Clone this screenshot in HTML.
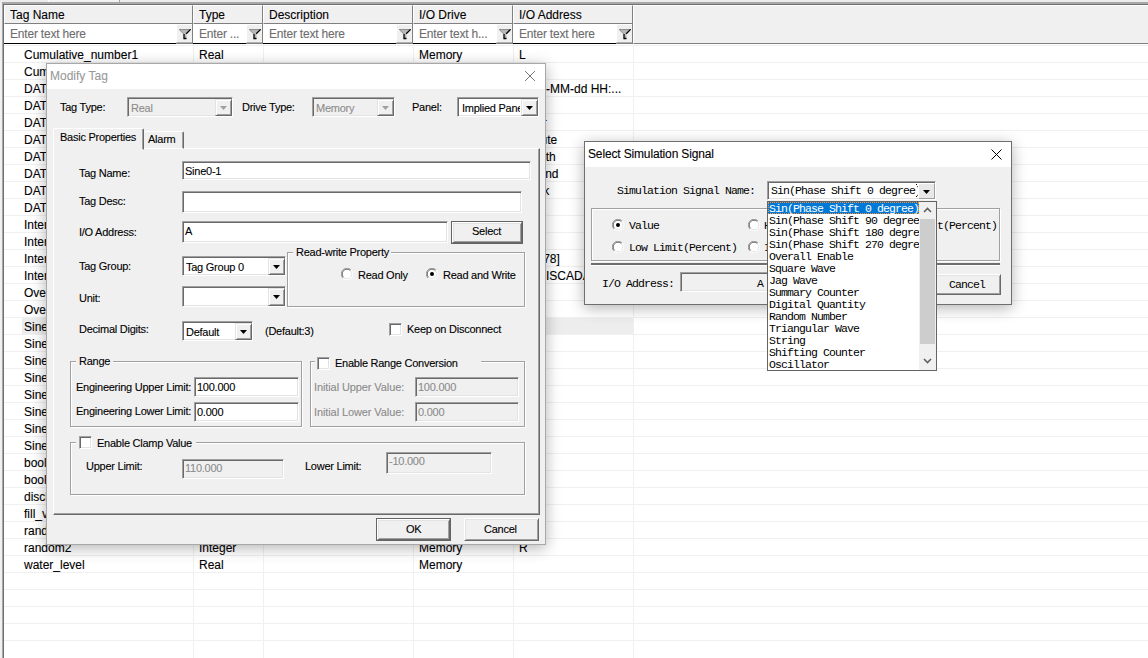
<!DOCTYPE html><html><head><meta charset="utf-8"><style>
*{box-sizing:border-box;margin:0;padding:0}
html,body{width:1148px;height:658px;overflow:hidden;background:#fff;font-family:"Liberation Sans",sans-serif;position:relative}
.a{position:absolute}
.t{position:absolute;white-space:nowrap;font-size:12px;line-height:14px;color:#000;-webkit-text-stroke:0.1px currentColor}
.ph{color:#6d6d6d}
.dlg{position:absolute;background:#f0f0f0;border:1px solid #8c8c8c;box-shadow:0 3px 14px rgba(0,0,0,.30)}
.d{position:absolute;white-space:nowrap;font-size:11px;line-height:13px;letter-spacing:-0.25px;color:#000;-webkit-text-stroke:0.1px currentColor}
.g{color:#8c8c8c}
.sunk{position:absolute;background:#fff;border:1px solid;border-color:#a0a0a0 #fff #fff #a0a0a0;box-shadow:inset 1px 1px 0 #696969,inset -1px -1px 0 #e3e3e3}
.dis{background:#f0f0f0}
.rais{position:absolute;background:#f0f0f0;border:1px solid;border-color:#fff #696969 #696969 #fff;box-shadow:inset 1px 1px 0 #e3e3e3,inset -1px -1px 0 #a0a0a0}
.grp{position:absolute;border:1px solid #a0a0a0;box-shadow:1px 1px 0 #fff,inset 1px 1px 0 #fff}
.m{position:absolute;white-space:nowrap;font-family:"Liberation Mono",monospace;font-size:11.5px;letter-spacing:-0.9px;line-height:12px;color:#000}
</style></head><body>
<div class="a" style="left:0px;top:0px;width:1148px;height:3px;background:#ececec;"></div>
<div class="a" style="left:48px;top:0px;width:1px;height:3px;background:#fff;"></div>
<div class="a" style="left:49px;top:0px;width:70px;height:3px;background:#f2f2f2;"></div>
<div class="a" style="left:119px;top:0px;width:1px;height:3px;background:#a0a0a0;"></div>
<div class="a" style="left:0px;top:3px;width:2px;height:655px;background:#f0f0f0;"></div>
<div class="a" style="left:2px;top:2px;width:1146px;height:2px;background:#a8a8a8;"></div>
<div class="a" style="left:2px;top:2px;width:1px;height:656px;background:#a8a8a8;"></div>
<div class="a" style="left:3px;top:4px;width:1145px;height:1px;background:#707070;"></div>
<div class="a" style="left:3px;top:4px;width:1px;height:654px;background:#707070;"></div>
<div class="a" style="left:4px;top:5px;width:189px;height:19px;background:#f0f0f0;border-right:1px solid #808080;border-bottom:1px solid #808080;border-top:1px solid #fff;border-left:1px solid #fff"></div>
<span class="t" style="left:10px;top:8px;">Tag Name</span>
<div class="a" style="left:4px;top:24px;width:189px;height:20px;background:#fff;border-right:1px solid #808080"></div>
<div class="a" style="left:4px;top:43px;width:172px;height:1px;background:#000;"></div>
<div class="a" style="left:176px;top:43px;width:16px;height:1px;background:#808080;"></div>
<span class="t ph" style="left:10px;top:27px;letter-spacing:-0.2px">Enter text here</span>
<div class="a" style="left:176px;top:24px;width:16px;height:19px;background:#f0f0f0;border-top:1px solid #fff;border-left:1px solid #fff;border-bottom:1px solid #b0b0b0"><svg width="16" height="19" viewBox="0 0 16 19" style="position:absolute;left:-1px;top:-1px"><path d="M3.5 6H14.5L10.5 10V14.5H8V10Z" fill="#b8b8b8"/><path d="M3 5.5H14.5M3.5 5.8L8 10.2" fill="none" stroke="#8c8c8c" stroke-width="1"/><path d="M14.6 5.4L10.2 9.8M8 10V14.5H10.5" fill="none" stroke="#000" stroke-width="1.3"/></svg></div>
<div class="a" style="left:193px;top:5px;width:70px;height:19px;background:#f0f0f0;border-right:1px solid #808080;border-bottom:1px solid #808080;border-top:1px solid #fff;border-left:1px solid #fff"></div>
<span class="t" style="left:199px;top:8px;">Type</span>
<div class="a" style="left:193px;top:24px;width:70px;height:20px;background:#fff;border-right:1px solid #808080"></div>
<div class="a" style="left:193px;top:43px;width:53px;height:1px;background:#000;"></div>
<div class="a" style="left:246px;top:43px;width:16px;height:1px;background:#808080;"></div>
<span class="t ph" style="left:199px;top:27px;letter-spacing:-0.2px">Enter ...</span>
<div class="a" style="left:246px;top:24px;width:16px;height:19px;background:#f0f0f0;border-top:1px solid #fff;border-left:1px solid #fff;border-bottom:1px solid #b0b0b0"><svg width="16" height="19" viewBox="0 0 16 19" style="position:absolute;left:-1px;top:-1px"><path d="M3.5 6H14.5L10.5 10V14.5H8V10Z" fill="#b8b8b8"/><path d="M3 5.5H14.5M3.5 5.8L8 10.2" fill="none" stroke="#8c8c8c" stroke-width="1"/><path d="M14.6 5.4L10.2 9.8M8 10V14.5H10.5" fill="none" stroke="#000" stroke-width="1.3"/></svg></div>
<div class="a" style="left:263px;top:5px;width:150px;height:19px;background:#f0f0f0;border-right:1px solid #808080;border-bottom:1px solid #808080;border-top:1px solid #fff;border-left:1px solid #fff"></div>
<span class="t" style="left:269px;top:8px;">Description</span>
<div class="a" style="left:263px;top:24px;width:150px;height:20px;background:#fff;border-right:1px solid #808080"></div>
<div class="a" style="left:263px;top:43px;width:133px;height:1px;background:#000;"></div>
<div class="a" style="left:396px;top:43px;width:16px;height:1px;background:#808080;"></div>
<span class="t ph" style="left:269px;top:27px;letter-spacing:-0.2px">Enter text here</span>
<div class="a" style="left:396px;top:24px;width:16px;height:19px;background:#f0f0f0;border-top:1px solid #fff;border-left:1px solid #fff;border-bottom:1px solid #b0b0b0"><svg width="16" height="19" viewBox="0 0 16 19" style="position:absolute;left:-1px;top:-1px"><path d="M3.5 6H14.5L10.5 10V14.5H8V10Z" fill="#b8b8b8"/><path d="M3 5.5H14.5M3.5 5.8L8 10.2" fill="none" stroke="#8c8c8c" stroke-width="1"/><path d="M14.6 5.4L10.2 9.8M8 10V14.5H10.5" fill="none" stroke="#000" stroke-width="1.3"/></svg></div>
<div class="a" style="left:413px;top:5px;width:100px;height:19px;background:#f0f0f0;border-right:1px solid #808080;border-bottom:1px solid #808080;border-top:1px solid #fff;border-left:1px solid #fff"></div>
<span class="t" style="left:419px;top:8px;">I/O Drive</span>
<div class="a" style="left:413px;top:24px;width:100px;height:20px;background:#fff;border-right:1px solid #808080"></div>
<div class="a" style="left:413px;top:43px;width:83px;height:1px;background:#000;"></div>
<div class="a" style="left:496px;top:43px;width:16px;height:1px;background:#808080;"></div>
<span class="t ph" style="left:419px;top:27px;letter-spacing:-0.2px">Enter text h...</span>
<div class="a" style="left:496px;top:24px;width:16px;height:19px;background:#f0f0f0;border-top:1px solid #fff;border-left:1px solid #fff;border-bottom:1px solid #b0b0b0"><svg width="16" height="19" viewBox="0 0 16 19" style="position:absolute;left:-1px;top:-1px"><path d="M3.5 6H14.5L10.5 10V14.5H8V10Z" fill="#b8b8b8"/><path d="M3 5.5H14.5M3.5 5.8L8 10.2" fill="none" stroke="#8c8c8c" stroke-width="1"/><path d="M14.6 5.4L10.2 9.8M8 10V14.5H10.5" fill="none" stroke="#000" stroke-width="1.3"/></svg></div>
<div class="a" style="left:513px;top:5px;width:120px;height:19px;background:#f0f0f0;border-right:1px solid #808080;border-bottom:1px solid #808080;border-top:1px solid #fff;border-left:1px solid #fff"></div>
<span class="t" style="left:519px;top:8px;">I/O Address</span>
<div class="a" style="left:513px;top:24px;width:120px;height:20px;background:#fff;border-right:1px solid #808080"></div>
<div class="a" style="left:513px;top:43px;width:103px;height:1px;background:#000;"></div>
<div class="a" style="left:616px;top:43px;width:16px;height:1px;background:#808080;"></div>
<span class="t ph" style="left:519px;top:27px;letter-spacing:-0.2px">Enter text here</span>
<div class="a" style="left:616px;top:24px;width:16px;height:19px;background:#f0f0f0;border-top:1px solid #fff;border-left:1px solid #fff;border-bottom:1px solid #b0b0b0"><svg width="16" height="19" viewBox="0 0 16 19" style="position:absolute;left:-1px;top:-1px"><path d="M3.5 6H14.5L10.5 10V14.5H8V10Z" fill="#b8b8b8"/><path d="M3 5.5H14.5M3.5 5.8L8 10.2" fill="none" stroke="#8c8c8c" stroke-width="1"/><path d="M14.6 5.4L10.2 9.8M8 10V14.5H10.5" fill="none" stroke="#000" stroke-width="1.3"/></svg></div>
<div class="a" style="left:633px;top:5px;width:515px;height:39px;background:#f0f0f0;border-bottom:1px solid #808080;border-top:1px solid #fff;border-left:1px solid #fff"></div>
<div class="a" style="left:4px;top:45px;width:1144px;height:1px;background:#f0f0f0;"></div>
<div class="a" style="left:4px;top:62px;width:1144px;height:1px;background:#f0f0f0;"></div>
<div class="a" style="left:4px;top:79px;width:1144px;height:1px;background:#f0f0f0;"></div>
<div class="a" style="left:4px;top:96px;width:1144px;height:1px;background:#f0f0f0;"></div>
<div class="a" style="left:4px;top:113px;width:1144px;height:1px;background:#f0f0f0;"></div>
<div class="a" style="left:4px;top:130px;width:1144px;height:1px;background:#f0f0f0;"></div>
<div class="a" style="left:4px;top:147px;width:1144px;height:1px;background:#f0f0f0;"></div>
<div class="a" style="left:4px;top:164px;width:1144px;height:1px;background:#f0f0f0;"></div>
<div class="a" style="left:4px;top:181px;width:1144px;height:1px;background:#f0f0f0;"></div>
<div class="a" style="left:4px;top:198px;width:1144px;height:1px;background:#f0f0f0;"></div>
<div class="a" style="left:4px;top:215px;width:1144px;height:1px;background:#f0f0f0;"></div>
<div class="a" style="left:4px;top:232px;width:1144px;height:1px;background:#f0f0f0;"></div>
<div class="a" style="left:4px;top:249px;width:1144px;height:1px;background:#f0f0f0;"></div>
<div class="a" style="left:4px;top:266px;width:1144px;height:1px;background:#f0f0f0;"></div>
<div class="a" style="left:4px;top:283px;width:1144px;height:1px;background:#f0f0f0;"></div>
<div class="a" style="left:4px;top:300px;width:1144px;height:1px;background:#f0f0f0;"></div>
<div class="a" style="left:4px;top:317px;width:1144px;height:1px;background:#f0f0f0;"></div>
<div class="a" style="left:4px;top:334px;width:1144px;height:1px;background:#f0f0f0;"></div>
<div class="a" style="left:4px;top:351px;width:1144px;height:1px;background:#f0f0f0;"></div>
<div class="a" style="left:4px;top:368px;width:1144px;height:1px;background:#f0f0f0;"></div>
<div class="a" style="left:4px;top:385px;width:1144px;height:1px;background:#f0f0f0;"></div>
<div class="a" style="left:4px;top:402px;width:1144px;height:1px;background:#f0f0f0;"></div>
<div class="a" style="left:4px;top:419px;width:1144px;height:1px;background:#f0f0f0;"></div>
<div class="a" style="left:4px;top:436px;width:1144px;height:1px;background:#f0f0f0;"></div>
<div class="a" style="left:4px;top:453px;width:1144px;height:1px;background:#f0f0f0;"></div>
<div class="a" style="left:4px;top:470px;width:1144px;height:1px;background:#f0f0f0;"></div>
<div class="a" style="left:4px;top:487px;width:1144px;height:1px;background:#f0f0f0;"></div>
<div class="a" style="left:4px;top:504px;width:1144px;height:1px;background:#f0f0f0;"></div>
<div class="a" style="left:4px;top:521px;width:1144px;height:1px;background:#f0f0f0;"></div>
<div class="a" style="left:4px;top:538px;width:1144px;height:1px;background:#f0f0f0;"></div>
<div class="a" style="left:4px;top:555px;width:1144px;height:1px;background:#f0f0f0;"></div>
<div class="a" style="left:4px;top:572px;width:1144px;height:1px;background:#f0f0f0;"></div>
<div class="a" style="left:4px;top:589px;width:1144px;height:1px;background:#f0f0f0;"></div>
<div class="a" style="left:4px;top:606px;width:1144px;height:1px;background:#f0f0f0;"></div>
<div class="a" style="left:4px;top:623px;width:1144px;height:1px;background:#f0f0f0;"></div>
<div class="a" style="left:4px;top:640px;width:1144px;height:1px;background:#f0f0f0;"></div>
<div class="a" style="left:22px;top:318px;width:611px;height:16px;background:#ededed;"></div>
<div class="a" style="left:193px;top:44px;width:1px;height:614px;background:#f0f0f0;"></div>
<div class="a" style="left:263px;top:44px;width:1px;height:614px;background:#f0f0f0;"></div>
<div class="a" style="left:413px;top:44px;width:1px;height:614px;background:#f0f0f0;"></div>
<div class="a" style="left:513px;top:44px;width:1px;height:614px;background:#f0f0f0;"></div>
<div class="a" style="left:633px;top:44px;width:1px;height:614px;background:#f0f0f0;"></div>
<span class="t" style="left:24px;top:48px;">Cumulative_number1</span>
<span class="t" style="left:199px;top:48px;">Real</span>
<span class="t" style="left:419px;top:48px;">Memory</span>
<span class="t" style="left:519px;top:48px;">L</span>
<span class="t" style="left:24px;top:65px;">Cumulative_number2</span>
<span class="t" style="left:199px;top:65px;">Real</span>
<span class="t" style="left:419px;top:65px;">Memory</span>
<span class="t" style="left:24px;top:82px;">DATE_TIME</span>
<span class="t" style="left:199px;top:82px;">String</span>
<span class="t" style="left:419px;top:82px;">Memory</span>
<span class="t" style="left:24px;top:99px;">DATE_Year</span>
<span class="t" style="left:199px;top:99px;">Integer</span>
<span class="t" style="left:419px;top:99px;">Memory</span>
<span class="t" style="left:24px;top:116px;">DATE_Hour</span>
<span class="t" style="left:199px;top:116px;">Integer</span>
<span class="t" style="left:419px;top:116px;">Memory</span>
<span class="t" style="left:24px;top:133px;">DATE_Minute</span>
<span class="t" style="left:199px;top:133px;">Integer</span>
<span class="t" style="left:419px;top:133px;">Memory</span>
<span class="t" style="left:24px;top:150px;">DATE_Month</span>
<span class="t" style="left:199px;top:150px;">Integer</span>
<span class="t" style="left:419px;top:150px;">Memory</span>
<span class="t" style="left:24px;top:167px;">DATE_Second</span>
<span class="t" style="left:199px;top:167px;">Integer</span>
<span class="t" style="left:419px;top:167px;">Memory</span>
<span class="t" style="left:24px;top:184px;">DATE_Week</span>
<span class="t" style="left:199px;top:184px;">Integer</span>
<span class="t" style="left:419px;top:184px;">Memory</span>
<span class="t" style="left:24px;top:201px;">DATE_Day</span>
<span class="t" style="left:199px;top:201px;">Integer</span>
<span class="t" style="left:419px;top:201px;">Memory</span>
<span class="t" style="left:24px;top:218px;">Internal1</span>
<span class="t" style="left:199px;top:218px;">Integer</span>
<span class="t" style="left:419px;top:218px;">Memory</span>
<span class="t" style="left:24px;top:235px;">Internal2</span>
<span class="t" style="left:199px;top:235px;">Integer</span>
<span class="t" style="left:419px;top:235px;">Memory</span>
<span class="t" style="left:24px;top:252px;">Internal3</span>
<span class="t" style="left:199px;top:252px;">String</span>
<span class="t" style="left:419px;top:252px;">Memory</span>
<span class="t" style="left:24px;top:269px;">Internal4</span>
<span class="t" style="left:199px;top:269px;">String</span>
<span class="t" style="left:419px;top:269px;">Memory</span>
<span class="t" style="left:24px;top:286px;">Overall1</span>
<span class="t" style="left:199px;top:286px;">Bool</span>
<span class="t" style="left:419px;top:286px;">Memory</span>
<span class="t" style="left:24px;top:303px;">Overall2</span>
<span class="t" style="left:199px;top:303px;">Bool</span>
<span class="t" style="left:419px;top:303px;">Memory</span>
<span class="t" style="left:24px;top:320px;">Sine0-1</span>
<span class="t" style="left:199px;top:320px;">Real</span>
<span class="t" style="left:419px;top:320px;">Memory</span>
<span class="t" style="left:24px;top:337px;">Sine0-2</span>
<span class="t" style="left:199px;top:337px;">Real</span>
<span class="t" style="left:419px;top:337px;">Memory</span>
<span class="t" style="left:24px;top:354px;">Sine0-3</span>
<span class="t" style="left:199px;top:354px;">Real</span>
<span class="t" style="left:419px;top:354px;">Memory</span>
<span class="t" style="left:24px;top:371px;">Sine0-4</span>
<span class="t" style="left:199px;top:371px;">Real</span>
<span class="t" style="left:419px;top:371px;">Memory</span>
<span class="t" style="left:24px;top:388px;">Sine0-5</span>
<span class="t" style="left:199px;top:388px;">Real</span>
<span class="t" style="left:419px;top:388px;">Memory</span>
<span class="t" style="left:24px;top:405px;">Sine0-6</span>
<span class="t" style="left:199px;top:405px;">Real</span>
<span class="t" style="left:419px;top:405px;">Memory</span>
<span class="t" style="left:24px;top:422px;">Sine0-7</span>
<span class="t" style="left:199px;top:422px;">Real</span>
<span class="t" style="left:419px;top:422px;">Memory</span>
<span class="t" style="left:24px;top:439px;">Sine0-8</span>
<span class="t" style="left:199px;top:439px;">Real</span>
<span class="t" style="left:419px;top:439px;">Memory</span>
<span class="t" style="left:24px;top:456px;">bool1</span>
<span class="t" style="left:199px;top:456px;">Bool</span>
<span class="t" style="left:419px;top:456px;">Memory</span>
<span class="t" style="left:24px;top:473px;">bool2</span>
<span class="t" style="left:199px;top:473px;">Bool</span>
<span class="t" style="left:419px;top:473px;">Memory</span>
<span class="t" style="left:24px;top:490px;">discharge</span>
<span class="t" style="left:199px;top:490px;">Bool</span>
<span class="t" style="left:419px;top:490px;">Memory</span>
<span class="t" style="left:24px;top:507px;">fill_value</span>
<span class="t" style="left:199px;top:507px;">Real</span>
<span class="t" style="left:419px;top:507px;">Memory</span>
<span class="t" style="left:24px;top:524px;">random1</span>
<span class="t" style="left:199px;top:524px;">Integer</span>
<span class="t" style="left:419px;top:524px;">Memory</span>
<span class="t" style="left:519px;top:524px;">R</span>
<span class="t" style="left:24px;top:541px;">random2</span>
<span class="t" style="left:199px;top:541px;">Integer</span>
<span class="t" style="left:419px;top:541px;">Memory</span>
<span class="t" style="left:519px;top:541px;">R</span>
<span class="t" style="left:24px;top:558px;">water_level</span>
<span class="t" style="left:199px;top:558px;">Real</span>
<span class="t" style="left:419px;top:558px;">Memory</span>
<span class="t" style="left:546px;top:82px;">-MM-dd HH:...</span>
<span class="t" style="left:536px;top:116px;">ur</span>
<span class="t" style="left:540.5px;top:133px;">ute</span>
<span class="t" style="left:539px;top:150px;">nth</span>
<span class="t" style="left:538.5px;top:167px;">ond</span>
<span class="t" style="left:536.5px;top:184px;">ek</span>
<span class="t" style="left:536.5px;top:252px;">678]</span>
<span class="t" style="left:546px;top:269px;">ISCADA</span>
<div class="dlg" style="left:46px;top:63px;width:500px;height:482px;border-color:#a8a8a8"></div>
<div class="a" style="left:47px;top:64px;width:498px;height:25px;background:#fff;"></div>
<span class="t" style="left:50px;top:69px;color:#999">Modify Tag</span>
<svg class="a" style="left:525px;top:71px" width="10" height="10" viewBox="0 0 10 10"><path d="M0 0L10 10M10 0L0 10" stroke="#777" stroke-width="1"/></svg>
<span class="d" style="left:60px;top:101px;">Tag Type:</span>
<div class="sunk" style="left:127px;top:97px;width:106px;height:20px;background:#f0f0f0"></div>
<div class="a" style="left:215px;top:99px;width:17px;height:17px;background:#f0f0f0;border:1px solid;border-color:#e3e3e3 #696969 #696969 #e3e3e3;box-shadow:inset 1px 1px 0 #fff,inset -1px -1px 0 #a0a0a0"></div>
<svg class="a" style="left:220px;top:106px" width="7" height="4" viewBox="0 0 7 4"><path d="M0 0H7L3.5 4Z" fill="#a0a0a0"/></svg>
<span class="d g" style="left:131px;top:102px;">Real</span>
<span class="d" style="left:242px;top:101px;">Drive Type:</span>
<div class="sunk" style="left:312px;top:97px;width:83px;height:20px;background:#f0f0f0"></div>
<div class="a" style="left:377px;top:99px;width:17px;height:17px;background:#f0f0f0;border:1px solid;border-color:#e3e3e3 #696969 #696969 #e3e3e3;box-shadow:inset 1px 1px 0 #fff,inset -1px -1px 0 #a0a0a0"></div>
<svg class="a" style="left:382px;top:106px" width="7" height="4" viewBox="0 0 7 4"><path d="M0 0H7L3.5 4Z" fill="#a0a0a0"/></svg>
<span class="d g" style="left:316px;top:102px;">Memory</span>
<span class="d" style="left:412px;top:101px;">Panel:</span>
<div class="sunk" style="left:457px;top:97px;width:82px;height:20px;background:#fff"></div>
<div class="a" style="left:521px;top:99px;width:17px;height:17px;background:#f0f0f0;border:1px solid;border-color:#e3e3e3 #696969 #696969 #e3e3e3;box-shadow:inset 1px 1px 0 #fff,inset -1px -1px 0 #a0a0a0"></div>
<svg class="a" style="left:526px;top:106px" width="7" height="4" viewBox="0 0 7 4"><path d="M0 0H7L3.5 4Z" fill="#000"/></svg>
<div class="a" style="left:459px;top:99px;width:61px;height:16px;overflow:hidden"><span class="d" style="left:3px;top:3px">Implied Panel</span></div>
<div class="a" style="left:53px;top:148px;width:487px;height:367px;border:1px solid;border-color:#fff #696969 #696969 #fff;box-shadow:inset -1px -1px 0 #a0a0a0"></div>
<div class="a" style="left:143px;top:131px;width:41px;height:18px;border:1px solid;border-color:#fff #696969 transparent #fff;box-shadow:inset -1px 0 0 #a0a0a0;border-radius:2px 2px 0 0"></div>
<span class="d" style="left:148px;top:133px;">Alarm</span>
<div class="a" style="left:53px;top:128px;width:91px;height:22px;background:#f0f0f0;border:1px solid;border-color:#fff #696969 transparent #fff;box-shadow:inset -1px 0 0 #a0a0a0;border-radius:2px 2px 0 0"></div>
<span class="d" style="left:60px;top:131px;">Basic Properties</span>
<span class="d" style="left:79px;top:167px;">Tag Name:</span>
<div class="sunk" style="left:182px;top:161px;width:349px;height:19px;background:#fff"></div>
<span class="d" style="left:185px;top:165px;">Sine0-1</span>
<span class="d" style="left:79px;top:195px;">Tag Desc:</span>
<div class="sunk" style="left:182px;top:191px;width:340px;height:22px;background:#fff"></div>
<span class="d" style="left:79px;top:226px;">I/O Address:</span>
<div class="sunk" style="left:182px;top:221px;width:266px;height:22px;background:#fff"></div>
<span class="d" style="left:185px;top:225px;">A</span>
<div class="a" style="left:451px;top:221px;width:72px;height:23px;border:1px solid #646464;background:#f0f0f0"></div>
<div class="rais" style="left:452px;top:222px;width:70px;height:21px"></div>
<span class="d" style="left:472px;top:225px;">Select</span>
<span class="d" style="left:79px;top:260px;">Tag Group:</span>
<div class="sunk" style="left:182px;top:256px;width:104px;height:20px;background:#fff"></div>
<div class="a" style="left:268px;top:258px;width:17px;height:17px;background:#f0f0f0;border:1px solid;border-color:#e3e3e3 #696969 #696969 #e3e3e3;box-shadow:inset 1px 1px 0 #fff,inset -1px -1px 0 #a0a0a0"></div>
<svg class="a" style="left:273px;top:265px" width="7" height="4" viewBox="0 0 7 4"><path d="M0 0H7L3.5 4Z" fill="#000"/></svg>
<span class="d" style="left:186px;top:261px;">Tag Group 0</span>
<span class="d" style="left:79px;top:292px;">Unit:</span>
<div class="sunk" style="left:182px;top:286px;width:104px;height:21px;background:#fff"></div>
<div class="a" style="left:268px;top:288px;width:17px;height:18px;background:#f0f0f0;border:1px solid;border-color:#e3e3e3 #696969 #696969 #e3e3e3;box-shadow:inset 1px 1px 0 #fff,inset -1px -1px 0 #a0a0a0"></div>
<svg class="a" style="left:273px;top:295px" width="7" height="4" viewBox="0 0 7 4"><path d="M0 0H7L3.5 4Z" fill="#000"/></svg>
<div class="a" style="left:287px;top:252px;width:238px;height:55px;border:1px solid #a0a0a0;box-shadow:1px 1px 0 #fff,inset 1px 1px 0 #fff"></div>
<div class="a" style="left:293px;top:246px;width:98px;height:14px;background:#f0f0f0;"></div>
<span class="d" style="left:296px;top:246px;">Read-write Property</span>
<svg class="a" style="left:341px;top:268px" width="12" height="12" viewBox="0 0 12 12"><circle cx="6" cy="6" r="5.5" fill="#fff"/><path d="M1.9 10.1A5.5 5.5 0 0 1 10.1 1.9" fill="none" stroke="#a0a0a0" stroke-width="1"/><path d="M2.6 9.4A4.5 4.5 0 0 1 9.4 2.6" fill="none" stroke="#696969" stroke-width="1"/><path d="M10.1 1.9A5.5 5.5 0 0 1 1.9 10.1" fill="none" stroke="#fff" stroke-width="1"/><path d="M9.4 2.6A4.5 4.5 0 0 1 2.6 9.4" fill="none" stroke="#e3e3e3" stroke-width="1"/></svg>
<span class="d" style="left:358px;top:269px;">Read Only</span>
<svg class="a" style="left:426px;top:268px" width="12" height="12" viewBox="0 0 12 12"><circle cx="6" cy="6" r="5.5" fill="#fff"/><path d="M1.9 10.1A5.5 5.5 0 0 1 10.1 1.9" fill="none" stroke="#a0a0a0" stroke-width="1"/><path d="M2.6 9.4A4.5 4.5 0 0 1 9.4 2.6" fill="none" stroke="#696969" stroke-width="1"/><path d="M10.1 1.9A5.5 5.5 0 0 1 1.9 10.1" fill="none" stroke="#fff" stroke-width="1"/><path d="M9.4 2.6A4.5 4.5 0 0 1 2.6 9.4" fill="none" stroke="#e3e3e3" stroke-width="1"/><circle cx="6" cy="6" r="2" fill="#000"/></svg>
<span class="d" style="left:443px;top:269px;">Read and Write</span>
<span class="d" style="left:79px;top:323px;">Decimal Digits:</span>
<div class="sunk" style="left:182px;top:321px;width:71px;height:20px;background:#fff"></div>
<div class="a" style="left:235px;top:323px;width:17px;height:17px;background:#f0f0f0;border:1px solid;border-color:#e3e3e3 #696969 #696969 #e3e3e3;box-shadow:inset 1px 1px 0 #fff,inset -1px -1px 0 #a0a0a0"></div>
<svg class="a" style="left:240px;top:330px" width="7" height="4" viewBox="0 0 7 4"><path d="M0 0H7L3.5 4Z" fill="#000"/></svg>
<span class="d" style="left:186px;top:326px;">Default</span>
<span class="d" style="left:265px;top:325px;">(Default:3)</span>
<div class="sunk" style="left:389px;top:323px;width:13px;height:13px;background:#fff"></div>
<span class="d" style="left:407px;top:323px;">Keep on Disconnect</span>
<div class="a" style="left:70px;top:361px;width:232px;height:66px;border:1px solid #a0a0a0;box-shadow:1px 1px 0 #fff,inset 1px 1px 0 #fff"></div>
<div class="a" style="left:76px;top:354px;width:37px;height:14px;background:#f0f0f0;"></div>
<span class="d" style="left:79px;top:355px;">Range</span>
<span class="d" style="left:76px;top:381px;letter-spacing:-0.25px">Engineering Upper Limit:</span>
<div class="sunk" style="left:194px;top:377px;width:105px;height:20px;background:#fff"></div>
<span class="d" style="left:197px;top:381px;">100.000</span>
<span class="d" style="left:76px;top:405px;letter-spacing:-0.25px">Engineering Lower Limit:</span>
<div class="sunk" style="left:194px;top:402px;width:105px;height:20px;background:#fff"></div>
<span class="d" style="left:197px;top:406px;">0.000</span>
<div class="a" style="left:310px;top:361px;width:215px;height:66px;border:1px solid #a0a0a0;box-shadow:1px 1px 0 #fff,inset 1px 1px 0 #fff"></div>
<div class="a" style="left:315px;top:354px;width:166px;height:14px;background:#f0f0f0;"></div>
<div class="sunk" style="left:317px;top:357px;width:13px;height:13px;background:#fff"></div>
<span class="d" style="left:335px;top:357px;">Enable Range Conversion</span>
<span class="d g" style="left:314px;top:381px;letter-spacing:-0.1px">Initial Upper Value:</span>
<div class="sunk" style="left:415px;top:377px;width:104px;height:20px;background:#f0f0f0"></div>
<span class="d g" style="left:418px;top:381px;">100.000</span>
<span class="d g" style="left:314px;top:406px;letter-spacing:-0.1px">Initial Lower Value:</span>
<div class="sunk" style="left:415px;top:402px;width:104px;height:20px;background:#f0f0f0"></div>
<span class="d g" style="left:418px;top:406px;">0.000</span>
<div class="a" style="left:70px;top:442px;width:455px;height:53px;border:1px solid #a0a0a0;box-shadow:1px 1px 0 #fff,inset 1px 1px 0 #fff"></div>
<div class="a" style="left:76px;top:436px;width:120px;height:14px;background:#f0f0f0;"></div>
<div class="sunk" style="left:79px;top:436px;width:13px;height:13px;background:#fff"></div>
<span class="d" style="left:97px;top:437px;">Enable Clamp Value</span>
<span class="d" style="left:86px;top:460px;">Upper Limit:</span>
<div class="sunk" style="left:182px;top:459px;width:102px;height:20px;background:#f0f0f0"></div>
<span class="d g" style="left:185px;top:462px;">110.000</span>
<span class="d" style="left:305px;top:460px;">Lower Limit:</span>
<div class="sunk" style="left:386px;top:452px;width:106px;height:22px;background:#f0f0f0"></div>
<span class="d g" style="left:389px;top:455px;">-10.000</span>
<div class="a" style="left:376px;top:518px;width:75px;height:23px;border:1px solid #646464;background:#f0f0f0"></div>
<div class="rais" style="left:377px;top:519px;width:73px;height:21px"></div>
<span class="d" style="left:406px;top:523px;">OK</span>
<div class="rais" style="left:464px;top:518px;width:75px;height:23px"></div>
<span class="d" style="left:484px;top:523px;">Cancel</span>
<div class="dlg" style="left:584px;top:141px;width:428px;height:164px;border-color:#6e6e6e"></div>
<div class="a" style="left:585px;top:142px;width:426px;height:25px;background:#fff;"></div>
<span class="t" style="left:588px;top:147px;letter-spacing:-0.15px">Select Simulation Signal</span>
<svg class="a" style="left:991px;top:149px" width="11" height="11" viewBox="0 0 11 11"><path d="M0.5 0.5L10.5 10.5M10.5 0.5L0.5 10.5" stroke="#000" stroke-width="1"/></svg>
<span class="m" style="left:617px;top:185px;">Simulation Signal Name:</span>
<div class="a" style="left:591px;top:208px;width:409px;height:53px;border:1px solid #a0a0a0;box-shadow:1px 1px 0 #fff,inset 1px 1px 0 #fff"></div>
<svg class="a" style="left:612px;top:219px" width="12" height="12" viewBox="0 0 12 12"><circle cx="6" cy="6" r="5.5" fill="#fff"/><path d="M1.9 10.1A5.5 5.5 0 0 1 10.1 1.9" fill="none" stroke="#a0a0a0" stroke-width="1"/><path d="M2.6 9.4A4.5 4.5 0 0 1 9.4 2.6" fill="none" stroke="#696969" stroke-width="1"/><path d="M10.1 1.9A5.5 5.5 0 0 1 1.9 10.1" fill="none" stroke="#fff" stroke-width="1"/><path d="M9.4 2.6A4.5 4.5 0 0 1 2.6 9.4" fill="none" stroke="#e3e3e3" stroke-width="1"/><circle cx="6" cy="6" r="2" fill="#000"/></svg>
<span class="m" style="left:629px;top:220px;">Value</span>
<svg class="a" style="left:612px;top:241px" width="12" height="12" viewBox="0 0 12 12"><circle cx="6" cy="6" r="5.5" fill="#fff"/><path d="M1.9 10.1A5.5 5.5 0 0 1 10.1 1.9" fill="none" stroke="#a0a0a0" stroke-width="1"/><path d="M2.6 9.4A4.5 4.5 0 0 1 9.4 2.6" fill="none" stroke="#696969" stroke-width="1"/><path d="M10.1 1.9A5.5 5.5 0 0 1 1.9 10.1" fill="none" stroke="#fff" stroke-width="1"/><path d="M9.4 2.6A4.5 4.5 0 0 1 2.6 9.4" fill="none" stroke="#e3e3e3" stroke-width="1"/></svg>
<span class="m" style="left:629px;top:242px;">Low Limit(Percent)</span>
<svg class="a" style="left:748px;top:219px" width="12" height="12" viewBox="0 0 12 12"><circle cx="6" cy="6" r="5.5" fill="#fff"/><path d="M1.9 10.1A5.5 5.5 0 0 1 10.1 1.9" fill="none" stroke="#a0a0a0" stroke-width="1"/><path d="M2.6 9.4A4.5 4.5 0 0 1 9.4 2.6" fill="none" stroke="#696969" stroke-width="1"/><path d="M10.1 1.9A5.5 5.5 0 0 1 1.9 10.1" fill="none" stroke="#fff" stroke-width="1"/><path d="M9.4 2.6A4.5 4.5 0 0 1 2.6 9.4" fill="none" stroke="#e3e3e3" stroke-width="1"/></svg>
<span class="m" style="left:764px;top:220px;">High Limit(Percent)</span>
<span class="m" style="left:937px;top:220px;">t(Percent)</span>
<svg class="a" style="left:748px;top:241px" width="12" height="12" viewBox="0 0 12 12"><circle cx="6" cy="6" r="5.5" fill="#fff"/><path d="M1.9 10.1A5.5 5.5 0 0 1 10.1 1.9" fill="none" stroke="#a0a0a0" stroke-width="1"/><path d="M2.6 9.4A4.5 4.5 0 0 1 9.4 2.6" fill="none" stroke="#696969" stroke-width="1"/><path d="M10.1 1.9A5.5 5.5 0 0 1 1.9 10.1" fill="none" stroke="#fff" stroke-width="1"/><path d="M9.4 2.6A4.5 4.5 0 0 1 2.6 9.4" fill="none" stroke="#e3e3e3" stroke-width="1"/></svg>
<span class="m" style="left:764px;top:242px;">Initial Value</span>
<div class="a" style="left:591px;top:263px;width:409px;height:2px;background:#6e6e6e;"></div>
<div class="a" style="left:591px;top:265px;width:409px;height:1px;background:#fff;"></div>
<span class="m" style="left:602px;top:278px;">I/O Address:</span>
<div class="sunk" style="left:680px;top:272px;width:181px;height:20px;background:#f0f0f0"></div>
<span class="m" style="left:757px;top:278px;">A</span>
<div class="a" style="left:850px;top:274px;width:71px;height:21px;border:1px solid #646464;background:#f0f0f0"></div>
<div class="rais" style="left:851px;top:275px;width:69px;height:19px"></div>
<span class="m" style="left:876px;top:279px;">OK</span>
<div class="rais" style="left:932px;top:274px;width:69px;height:21px"></div>
<span class="m" style="left:949px;top:279px;">Cancel</span>
<div class="sunk" style="left:767px;top:181px;width:169px;height:19px;background:#fff"></div>
<span class="m" style="left:771px;top:185px;">Sin(Phase Shift 0 degree)</span>
<div class="a" style="left:916px;top:184px;width:1px;height:1px;background:#000;"></div>
<div class="a" style="left:916px;top:196px;width:1px;height:1px;background:#000;"></div>
<div class="a" style="left:918px;top:183px;width:17px;height:16px;background:#e8e8e8;border:1px solid;border-color:#fff #a0a0a0 #a0a0a0 #fff"></div>
<svg class="a" style="left:923px;top:190px" width="7" height="4" viewBox="0 0 7 4"><path d="M0 0H7L3.5 4Z" fill="#000"/></svg>
<div class="a" style="left:767px;top:201px;width:170px;height:170px;background:#fff;border:1px solid #646464"></div>
<div class="a" style="left:768px;top:202px;width:151px;height:12px;background:#0078d7;outline:1px dotted #ff8c28;outline-offset:-1px"></div>
<div class="a" style="left:768px;top:202px;width:151px;height:168px;overflow:hidden">
<span class="m" style="left:1px;top:1px;color:#fff">Sin(Phase Shift 0 degree)</span>
<span class="m" style="left:1px;top:13px;color:#000">Sin(Phase Shift 90 degree)</span>
<span class="m" style="left:1px;top:25px;color:#000">Sin(Phase Shift 180 degree)</span>
<span class="m" style="left:1px;top:37px;color:#000">Sin(Phase Shift 270 degree)</span>
<span class="m" style="left:1px;top:49px;color:#000">Overall Enable</span>
<span class="m" style="left:1px;top:61px;color:#000">Square Wave</span>
<span class="m" style="left:1px;top:73px;color:#000">Jag Wave</span>
<span class="m" style="left:1px;top:85px;color:#000">Summary Counter</span>
<span class="m" style="left:1px;top:97px;color:#000">Digital Quantity</span>
<span class="m" style="left:1px;top:109px;color:#000">Random Number</span>
<span class="m" style="left:1px;top:121px;color:#000">Triangular Wave</span>
<span class="m" style="left:1px;top:133px;color:#000">String</span>
<span class="m" style="left:1px;top:145px;color:#000">Shifting Counter</span>
<span class="m" style="left:1px;top:157px;color:#000">Oscillator</span>
</div>
<div class="a" style="left:919px;top:202px;width:17px;height:168px;background:#f0f0f0;"></div>
<div class="a" style="left:920px;top:219px;width:15px;height:125px;background:#cdcdcd;"></div>
<svg class="a" style="left:923px;top:207px" width="9" height="6" viewBox="0 0 9 6"><path d="M1 5L4.5 1.5L8 5" fill="none" stroke="#606060" stroke-width="1.6"/></svg>
<svg class="a" style="left:923px;top:358px" width="9" height="6" viewBox="0 0 9 6"><path d="M1 1L4.5 4.5L8 1" fill="none" stroke="#606060" stroke-width="1.6"/></svg>
</body></html>
